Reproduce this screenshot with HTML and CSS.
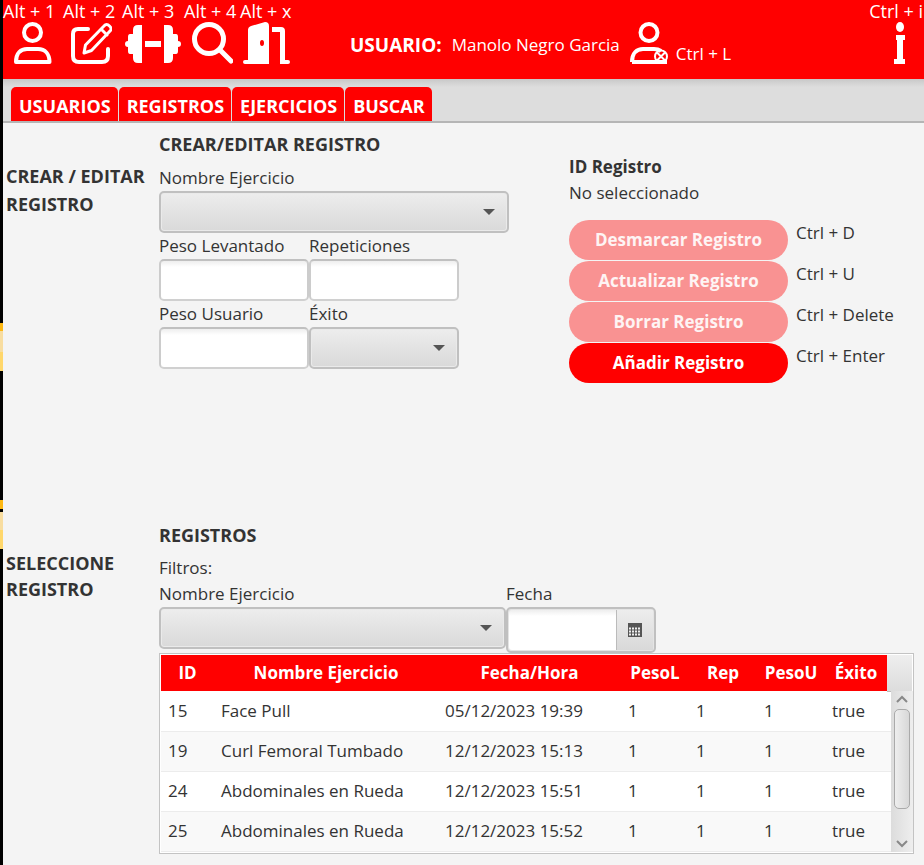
FILE: index.html
```html
<!DOCTYPE html>
<html lang="es">
<head>
<meta charset="utf-8">
<meta name="viewport" content="width=device-width, initial-scale=1">
<title>Registros</title>
<link rel="stylesheet" href="styles.css">
</head>
<body>
<div class="app">
  <header class="topbar">
    <nav class="shortcuts" aria-label="Accesos">
      <button class="shortcut" type="button"><span>Alt + 1</span>
        <svg class="icon" viewBox="-4 0 42 42" fill="none" stroke="#fff" stroke-width="4"><circle cx="18.500" cy="10.500" r="8.500"/><path d="M2 40C2 31 7 27 13 27H24C31 27 35.500 32 35.500 40Z" stroke-linejoin="round"/></svg>
      </button>
      <button class="shortcut" type="button"><span>Alt + 2</span>
        <svg class="icon" viewBox="0 0 42 42" fill="none" stroke="#fff" stroke-width="4" stroke-linecap="round" stroke-linejoin="round"><path d="M18 7H8Q3 7 3 12V34Q3 40 9 40H32Q38 40 38 34V27"/><path d="M14 31L15.500 23L34 4Q36.500 1 39.500 4T40 9L21.500 28.500ZM31 7L37 13" stroke-width="3"/></svg>
      </button>
      <button class="shortcut" type="button"><span>Alt + 3</span>
        <svg class="icon icon-wide" viewBox="0 0 56 42" fill="#fff"><path d="M8 8Q8 3 13 3H17V41H13Q8 41 8 36V32H5Q3 32 3 29V25Q0 25 0 22T3 19V15Q3 12 5 12H8ZM48 8Q48 3 43 3H39V41H43Q48 41 48 36V32H51Q53 32 53 29V25Q56 25 56 22T53 19V15Q53 12 51 12H48ZM20 19H36V25H20Z"/></svg>
      </button>
      <button class="shortcut" type="button"><span>Alt + 4</span>
        <svg class="icon" viewBox="-2 0 42 42" fill="none" stroke="#fff" stroke-width="5" stroke-linecap="round"><circle cx="16" cy="17" r="14.500"/><path d="M27 28L38 39"/></svg>
      </button>
      <button class="shortcut" type="button"><span>Alt + x</span>
        <svg class="icon icon-door" viewBox="0 0 48 42" fill="#fff"><path fill-rule="evenodd" d="M5 8Q5 5 8 4L22 0Q26 0 26 4V42H2Q0 42 0 40T2 38H5ZM19 18A2 3 0 1 0 19 24A2 3 0 1 0 19 18Z"/><path d="M29 5H38Q42 5 42 9V38H45Q47 38 47 40T45 42H37V10H29Z"/></svg>
      </button>
    </nav>
    <div class="user">
      <strong>USUARIO:</strong>
      <span class="user-name">Manolo Negro Garcia</span>
      <button class="logout" type="button">
        <svg class="icon" viewBox="0 0 42 42" fill="none" stroke="#fff" stroke-width="4"><circle cx="21" cy="10.500" r="8.500"/><path d="M4 40C4 31 9 27 15 27H26Q30 27 33 29" stroke-linejoin="round"/><path d="M4 40H39"/><g stroke-width="2"><circle cx="33" cy="34.500" r="6"/><path d="M29 30.500L37 38.500M37 30.500L29 38.500"/></g></svg>
        <span>Ctrl + L</span>
      </button>
    </div>
    <button class="shortcut info" type="button"><span>Ctrl + i</span>
      <svg class="icon icon-info" viewBox="0 0 14 42" fill="#fff"><ellipse cx="7" cy="5" rx="4" ry="5"/><path d="M3 13H12V18H10V37H12V42H1V37H4V18H3Z"/></svg>
    </button>
  </header>

  <nav class="tabs" aria-label="Secciones">
    <button type="button">USUARIOS</button>
    <button type="button">REGISTROS</button>
    <button type="button">EJERCICIOS</button>
    <button type="button">BUSCAR</button>
  </nav>

  <main>
    <section class="section editor">
      <h2 class="side-title">CREAR / EDITAR REGISTRO</h2>
      <form class="editor-form">
        <h3>CREAR/EDITAR REGISTRO</h3>
        <label for="exercise">Nombre Ejercicio</label>
        <select id="exercise" class="control exercise"><option></option></select>
        <div class="fields">
          <div class="field"><label for="weight">Peso Levantado</label><input id="weight" class="control" type="text"></div>
          <div class="field"><label for="reps">Repeticiones</label><input id="reps" class="control" type="text"></div>
          <div class="field"><label for="body-weight">Peso Usuario</label><input id="body-weight" class="control" type="text"></div>
          <div class="field"><label for="success">Éxito</label><select id="success" class="control"><option></option></select></div>
        </div>
      </form>
      <div class="actions">
        <h3>ID Registro</h3>
        <p>No seleccionado</p>
        <div class="action-grid">
          <button type="button" disabled>Desmarcar Registro</button><span>Ctrl + D</span>
          <button type="button" disabled>Actualizar Registro</button><span>Ctrl + U</span>
          <button type="button" disabled>Borrar Registro</button><span>Ctrl + Delete</span>
          <button type="button">Añadir Registro</button><span>Ctrl + Enter</span>
        </div>
      </div>
    </section>

    <section class="section records">
      <h2 class="side-title">SELECCIONE REGISTRO</h2>
      <div class="records-body">
        <h3>REGISTROS</h3>
        <p>Filtros:</p>
        <div class="filters">
          <div class="field filter-exercise"><label for="filter-exercise">Nombre Ejercicio</label><select id="filter-exercise" class="control"><option></option></select></div>
          <div class="field filter-date"><label for="filter-date">Fecha</label>
            <div class="date-box"><input id="filter-date" type="text"><button type="button" aria-label="Abrir calendario"><svg viewBox="0 0 14 14"><path fill="#555" d="M0 0H14V14H0Z"/><path stroke="#eee" stroke-width="2" stroke-dasharray="2 1" d="M1 5.500H13M1 8.500H13M1 11.500H13"/></svg></button></div>
          </div>
        </div>
        <div class="table-box">
          <table>
            <colgroup><col class="c-id"><col><col class="c-date"><col class="c-num"><col class="c-num"><col class="c-num"><col class="c-ok"><col class="c-end"></colgroup>
            <thead><tr><th>ID</th><th>Nombre Ejercicio</th><th>Fecha/Hora</th><th>PesoL</th><th>Rep</th><th>PesoU</th><th>Éxito</th><td class="filler"></td></tr></thead>
            <tbody>
              <tr><td>15</td><td>Face Pull</td><td>05/12/2023 19:39</td><td>1</td><td>1</td><td>1</td><td>true</td><td></td></tr>
              <tr><td>19</td><td>Curl Femoral Tumbado</td><td>12/12/2023 15:13</td><td>1</td><td>1</td><td>1</td><td>true</td><td></td></tr>
              <tr><td>24</td><td>Abdominales en Rueda</td><td>12/12/2023 15:51</td><td>1</td><td>1</td><td>1</td><td>true</td><td></td></tr>
              <tr><td>25</td><td>Abdominales en Rueda</td><td>12/12/2023 15:52</td><td>1</td><td>1</td><td>1</td><td>true</td><td></td></tr>
            </tbody>
          </table>
          <div class="scrollbar">
            <svg viewBox="0 0 12 8"><path d="M1 7L6 2L11 7"/></svg>
            <div class="track"><div class="thumb"></div></div>
            <svg viewBox="0 0 12 8"><path d="M1 1L6 6L11 1"/></svg>
          </div>
        </div>
      </div>
    </section>
  </main>
</div>
</body>
</html>
```
FILE: styles.css
```css
* { box-sizing: border-box; }
body {
  margin: 0;
  font: 17px/26px "Open Sans", "Noto Sans", sans-serif;
  color: #333;
  background: linear-gradient(#000 323px, #fdb813 323px 331px, #f8dda0 331px 352px, #ffd76b 352px 371px, #000 371px 500px, #fdb813 500px 509px, #000 509px 512px, #f8dda0 512px 530px, #ffd76b 530px 549px, #000 549px);
  padding-left: 3px;
}
.app { min-height: 100vh; background: #f4f4f4; }
h2, h3, p { margin: 0; font-size: 18px; }
p, .actions h3 { font-size: 17px; }
h2, h3, strong, th { font-weight: 700; }
button, input, select { font: inherit; color: inherit; margin: 0; }
button { border: 0; padding: 0; background: none; }
label { display: block; }

.topbar { display: flex; height: 79px; background: #f00; color: #fff; }
.shortcuts { display: grid; grid-template-columns: 60px 59px 62px 56px 55px; justify-items: start; }
.shortcut { display: flex; flex-direction: column; align-items: flex-start; line-height: 22px; font-size: 18px; white-space: nowrap; }
.shortcut .icon { align-self: center; margin-left: 3px; }
.icon { display: block; width: 42px; height: 42px; flex: none; }
.icon-wide { width: 56px; }
.icon-door { width: 48px; }
.shortcut .icon-wide { width: 56px; }
.shortcut .icon-info { width: 14px; align-self: flex-end; margin: 0 16px 0 0; }
.user { display: flex; align-items: flex-start; margin-left: 55px; padding-top: 22px; line-height: 46px; white-space: nowrap; }
.user strong { font-size: 19px; }
.user-name { margin: 0 8px 0 10px; }
.logout { display: flex; align-items: flex-end; gap: 6px; line-height: 20px; }
.info { margin-left: auto; padding-right: 1px; }

.tabs { display: flex; gap: 1px; height: 44px; padding: 8px 8px 0; background: linear-gradient(#c8c8c8, #ddd 8px); border-bottom: 2px solid #b5b5b5; }
.tabs button { padding: 4px 7px 0 8px; background: #f00; color: #fff; font-size: 18px; font-weight: 700; border-radius: 5px 5px 0 0; }

.section { display: grid; padding: 0 10px 0 3px; }
.editor { grid-template-columns: 153px 410px 1fr; min-height: 399px; padding-top: 8px; }
.records { grid-template-columns: 153px 1fr; }
.side-title { padding-top: 31px; line-height: 28px; }
.records .side-title { padding-top: 28px; line-height: 26px; }
h3 { margin-bottom: 8px; }
.records h3 { margin-bottom: 7px; }
.control { display: block; width: 100%; height: 42px; border: 2px solid #c0c0c0; border-radius: 5px; padding: 0 10px; outline: 0; }
input.control { background: linear-gradient(#eee, #fff 6px); border-color: #c0c0c0 #ccc #d0d0d0; }
select.control {
  appearance: none;
  background: url("data:image/svg+xml,%3Csvg xmlns='http://www.w3.org/2000/svg' viewBox='0 0 12 6'%3E%3Cpath fill='%23555' d='M0 0H12L6 6Z'/%3E%3C/svg%3E") right 12px center / 12px 6px no-repeat, linear-gradient(#ededed, #d9d9d9);
  box-shadow: inset 0 0 0 1px #eaeaea;
}
.exercise { width: 350px; }
.fields { display: grid; grid-template-columns: 150px 150px; }
.actions { padding-top: 23px; }
.actions h3 { margin: 0; }
.action-grid { display: grid; grid-template-columns: 219px 1fr; gap: 1px 8px; margin-top: 14px; }
.action-grid button { height: 40px; border-radius: 20px; background: #f00; color: #fff; font-weight: 700; }
.action-grid button:disabled { background: #f99292; color: #fef4f4; }

.filters { display: flex; }
.filter-exercise { width: 347px; }
.filter-date { width: 150px; }
.date-box { display: flex; height: 46px; border: 2px solid #c0c0c0; border-radius: 5px; background: #e4e4e4; padding: 1px; }
.date-box input { flex: 1; min-width: 0; border: 0; outline: 0; border-radius: 3px 0 0 3px; background: linear-gradient(#eee, #fff 6px); }
.date-box button { width: 37px; border-left: 1px solid #bbb; background: linear-gradient(#ededed, #d9d9d9); }
.date-box svg { display: block; width: 14px; height: 14px; margin: auto; }
.table-box { position: relative; height: 201px; border: 1px solid #c3c3c3; overflow: hidden; padding: 1px; background: #fff; }
table { width: 100%; table-layout: fixed; border-collapse: collapse; }
.c-id { width: 53px; }
.c-date { width: 183px; }
.c-num { width: 68px; }
.c-ok { width: 62px; }
.c-end { width: 25px; }
th { height: 36px; padding: 0; background: #f00; color: #fff; }
.filler { background: linear-gradient(#eee, #dcdcdc); border-bottom: 1px solid #bbb; }
td { padding: 0 0 0 7px; white-space: nowrap; }
tbody td { height: 40px; border-bottom: 1px solid #ececec; }
tbody tr:nth-child(even) { background: #f9f9f9; }
.scrollbar { position: absolute; top: 37px; right: 0; bottom: 1px; width: 22px; display: flex; flex-direction: column; align-items: center; padding: 4px 0; gap: 6px; background: linear-gradient(90deg, #dcdcdc, #eee); }
.scrollbar svg { width: 12px; height: 8px; fill: none; stroke: #888; stroke-width: 2; }
.track { flex: 1; align-self: stretch; padding: 0 3px; }
.thumb { height: 100px; border: 1px solid #aaa; border-radius: 5px; background: linear-gradient(90deg, #eee, #d8d8d8); }
```
